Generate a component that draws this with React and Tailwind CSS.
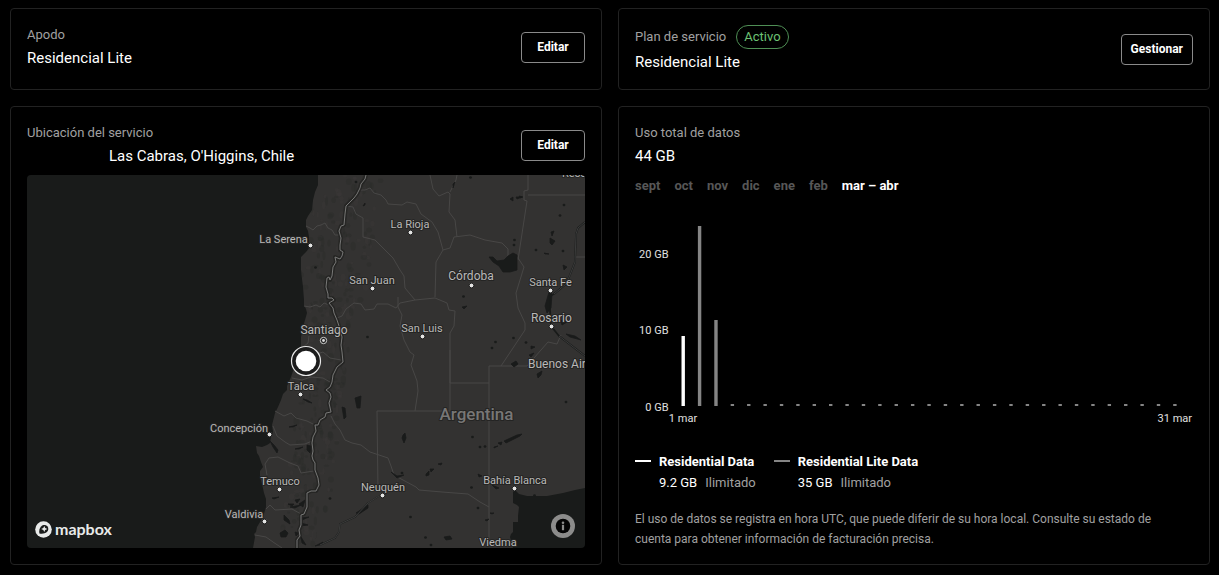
import React from 'react';

const MONTHS = ['sept', 'oct', 'nov', 'dic', 'ene', 'feb', 'mar – abr'];

const CITIES = [
  { name: 'La Rioja', x: 410, y: 228, dot: [410.5, 232.5] },
  { name: 'La Serena', x: 283.5, y: 243, dot: [310.5, 245.5] },
  { name: 'San Juan', x: 372, y: 284, dot: [372.5, 288.5] },
  { name: 'Córdoba', x: 471, y: 280, dot: [471.5, 285.5], large: true },
  { name: 'Santa Fe', x: 550.5, y: 286, dot: [550.5, 290.5] },
  { name: 'Rosario', x: 551.5, y: 322, dot: [551.5, 326.5], large: true },
  { name: 'San Luis', x: 422, y: 332, dot: [422.5, 336.5] },
  { name: 'Santiago', x: 324, y: 334, large: true },
  { name: 'Talca', x: 301, y: 390, dot: [300.5, 394.5] },
  { name: 'Concepción', x: 239, y: 432, dot: [269.5, 434.5] },
  { name: 'Temuco', x: 280, y: 485, dot: [279.5, 489.5] },
  { name: 'Neuquén', x: 383, y: 491, dot: [382.5, 495.5] },
  { name: 'Bahía Blanca', x: 515, y: 484, dot: [514.5, 488.5] },
  { name: 'Valdivia', x: 244, y: 518, dot: [264.5, 521.5] },
  { name: 'Viedma', x: 498, y: 546 },
];

const LAND =
  'M318 175 L318 185 L315 192 L313 200 L312 210 L308 216 L306 220 L306 227 L308 231 L309 237 L309 248 L306 252 L301 257 L301 270 L302 279 L303 287 L304 300 L304 305 L306 309 L307 313 L305 320 L303 327 L301 337 L301 347 L298 358 L294 368 L291 377 L287 386 L287 390 L283 394 L281 400 L278 407 L275 413 L272 425 L273 432 L271 437 L270 443 L267 445 L262 447 L256 446 L257 453 L259 456 L261 462 L263 467 L260 471 L260 477 L262 484 L264 493 L266 499 L266 507 L263 517 L257 527 L256 532 L254 534 L255 537 L253 548 L513 548 L510 537 L511 534 L513 532 L513 522 L518 522 L518 516 L519 507 L517 505 L513 503 L513 492 L515 490 L519 494 L527 496 L547 496 L563 493 L575 490 L585 488 L585 175 Z';

const ANDES =
  'M366 175 L365 179 L361 184 L360 188 L357 194 L354 198 L350 202 L346 206 L345 214 L344 225 L341 226 L339 231 L341 238 L340 245 L340 250 L343 252 L342 256 L340 259 L335 257 L336 262 L333 267 L332 276 L330 280 L329 277 L327 278 L326 287 L328 294 L328 298 L332 298 L334 300 L329 303 L333 308 L334 313 L337 320 L339 326 L342 337 L341 345 L342 352 L343 362 L337 367 L333 375 L332 382 L330 387 L326 390 L330 393 L331 397 L329 403 L331 412 L326 413 L325 417 L320 420 L318 425 L315 425 L316 431 L313 437 L312 443 L313 451 L312 456 L313 460 L315 463 L315 470 L318 478 L319 485 L316 491 L311 491 L307 493 L307 507 L304 514 L301 515 L301 525 L299 530 L300 536 L297 540 L297 548';

const PROVINCES = [
  'M306 226 L310 228 L313 230 L317 226 L321 225 L325 223 L328 228 L332 230 L335 235 L339 235',
  'M304 306 L310 307 L316 305 L320 307 L324 303 L329 305',
  'M346 206 L353 207 L356 214 L363 218 L363 237 L375 240 L384 249 L393 258 L400 270 L404 276 L405 288 L415 300 L435 298 L447 303 L449 310 L455 311 L454 326 L450 333 L450 383',
  'M360 190 L365 190 L370 188 L374 193 L381 195 L386 200 L388 204 L402 205 L407 202 L416 204 L421 214 L432 222 L438 232 L443 250 L436 262 L435 297',
  'M443 250 L450 248 L454 237 L470 235 L485 240 L502 243 L508 249 L508 257 L518 258 L524 267 L520 280 L516 293 L518 308 L525 323 L525 330 L505 360 L501 366',
  'M430 175 L433 189 L439 196 L448 192 L450 194 L449 212 L455 220 L457 237',
  'M450 192 L456 180 L457 175',
  'M528 175 L528 190 L524 191 L524 200 L527 201 L518 260',
  'M528 195 L585 195',
  'M585 257 L574 257',
  'M337 318 L342 316 L346 309 L354 303 L361 304 L365 310 L374 309 L377 304 L388 304 L396 308 L400 303 L415 300',
  'M398 297 L398 307 L402 315 L400 326 L404 340 L410 352 L414 355 L411 365 L417 381 L418 391 L415 411',
  'M377 411 L450 411 L450 350',
  'M377 411 L378 491',
  'M450 383 L489 383',
  'M489 366 L489 540',
  'M489 366 L527 366 L548 342 L557 344 L561 335',
  'M331 416 L335 424 L340 430 L345 440 L352 443 L361 445 L370 452 L388 458 L391 466 L394 475 L403 480 L416 487 L419 490 L442 492 L468 494 L480 502 L489 507',
  'M292 378 L302 380 L311 377 L323 378 L330 382',
  'M275 411 L284 416 L291 413 L296 418 L307 421 L315 425',
  'M273 426 L277 436 L285 442 L290 445 L305 444 L312 441',
  'M267 475 L265 464 L269 458 L278 457 L290 463 L298 466 L301 473 L314 471',
  'M266 509 L270 505 L275 510 L292 509 L301 514',
  'M255 535 L266 537 L273 542 L282 548',
  'M303 347 L308 343 L309 336',
  'M314 355 L323 352 L330 358 L341 360',
];

const WATER = [
  'M489 257 L493 257 L497 261 L504 260 L508 256 L513 253 L517 255 L517 270 L510 272 L503 272 L499 266 L493 262 Z',
  'M549 292 L552 294 L551 308 L547 313 L545 306 Z',
  'M355 398 L361 396 L360 408 L357 408 Z',
  'M342 407 L345 408 L346 417 L344 419 Z',
  'M356 513 L368 505 L368 508 L359 514 Z',
  'M504 441 L517 435 L522 434 L520 436 L506 443 Z',
  'M498 443 L502 442 L501 445 Z M494 447 L498 446 L494 448 Z',
  'M403 435 L405 433 L406 438 L404 443 L402 438 Z',
  'M426 474 L429 471 L429 475 L426 476 Z M430 469 L434 469 L431 472 Z M438 464 L442 463 L441 465 Z',
  'M444 537 L450 536 L452 539 L446 540 Z',
  'M537 374 L542 371 L541 375 L538 378 Z',
  'M511 364 L516 361 L518 364 L514 367 Z',
  'M303 399 L307 400 L312 403 L308 402 Z',
  'M289 427 L297 425 L293 427 Z',
  'M270 441 L274 445 L278 450 L277 453 L273 447 Z',
  'M295 449 L303 447 L299 449 Z',
  'M307 445 L311 446 L310 453 L307 450 Z',
  'M288 504 L294 504 L292 506 Z M295 500 L300 499 L297 503 Z M299 504 L305 500 L303 507 Z M290 507 L301 505 L295 508 Z',
  'M284 515 L289 520 L290 524 L284 520 Z M280 533 L285 530 L288 533 L286 537 L281 537 Z',
  'M295 532 L299 533 L296 536 Z M301 518 L309 517 L302 520 Z M301 523 L308 525 L301 526 Z M301 537 L306 545 L302 543 Z',
  'M272 498 L279 497 L274 499 Z M315 546 L323 542 L320 545 Z',
  'M510 199 L513 197 L513 201 Z M516 197 L522 197 L517 199 Z M519 196 L523 197 L520 198 Z',
  'M550 238 L555 241 L552 245 L550 243 Z M544 253 L549 254 L545 254 Z M563 265 L567 267 L564 270 Z M551 232 L554 231 L552 236 Z',
  'M453 184 L455 182 L453 188 Z M560 320 L567 322 L562 325 Z M566 334 L575 336 L581 340 L570 337 Z',
  'M363 206 L365 203 L365 205 Z M462 307 L467 306 L464 309 Z M531 346 L535 347 L531 349 Z',
  'M529 355 L534 353 L531 357 Z M485 520 L489 519 L487 521 Z M490 513 L494 513 L492 514 Z M492 485 L499 488 L496 489 Z',
  'M391 472 L397 476 L404 475 L397 478 Z M478 474 L482 476 L479 477 Z',
];

const PONDS = [
  [315.5, 267.5], [356, 182], [367.5, 337], [330, 498.5], [470.5, 177.5], [564, 205], [560, 215.5],
  [536, 250], [563, 251], [514.5, 240], [514, 245], [463.5, 296.5], [513.5, 338], [526, 342.5],
  [495.5, 342], [492, 348], [566, 402], [472.5, 437], [480, 447], [485, 446.5], [471.5, 487.5],
  [410.5, 517], [425.5, 537.5], [431, 545], [478, 508], [534.5, 495.5], [402, 473],
];

const random = (n) => {
  const v = Math.sin(n * 127.1 + 31.7) * 43758.5453;
  return v - Math.floor(v);
};

const RELIEF = Array.from({ length: 330 }, (_, i) => {
  const t = random(i);
  const y = 176 + t * 368;
  const drift = y < 360 ? 345 - (y - 176) * 0.1 : 325 - (y - 360) * 0.12;
  return {
    x: drift + (random(i + 900) - 0.5) * (y < 300 ? 72 : 46),
    y,
    rx: 1 + random(i + 400) * 2.2,
    ry: 1 + random(i + 1300) * 3.5,
    dark: random(i + 2200) > 0.45,
  };
});

const DAYS = Array.from({ length: 31 }, (_, i) => ({
  day: i + 1,
  height: i === 0 ? 70 : i === 1 ? 180 : i === 2 ? 86 : 2,
  color: i === 0 ? '#ffffff' : '#858585',
}));

function Card({ children }) {
  return <section className="min-w-0 rounded border border-[#222222] px-4 pt-4 pb-[15px]">{children}</section>;
}

function OutlineButton({ children, label }) {
  return (
    <button
      type="button"
      aria-label={label}
      className="min-w-16 shrink-0 rounded border border-[#8a8a8a] px-[9px] py-[5px] text-xs leading-[19px] font-bold text-white"
    >
      {children}
    </button>
  );
}

function Heading({ label, badge, value, indent = false, action }) {
  return (
    <div className="flex items-center justify-between gap-4">
      <div className="min-w-0">
        <div className="flex items-center gap-2.5">
          <h2 className="text-[13px] leading-5 text-[#a0a0a0]">{label}</h2>
          {badge && (
            <span className="rounded-full border border-[#4f8f55] px-[7px] text-[13px] leading-[22px] text-[#6cc273]">
              {badge}
            </span>
          )}
        </div>
        <p className={`mt-px text-[15px] leading-6 text-white ${indent ? 'pl-[82px]' : ''}`}>{value}</p>
      </div>
      {action}
    </div>
  );
}

function ServiceMap() {
  return (
    <div className="relative mt-[7px] overflow-hidden rounded bg-[#191b1a]">
      <svg
        viewBox="27 175 558 373"
        preserveAspectRatio="xMidYMid slice"
        className="block h-[373px] w-full"
        role="img"
        aria-label="Mapa de Chile y Argentina"
      >
        <clipPath id="land">
          <path d={LAND} />
        </clipPath>
        <path d={LAND} fill="#333231" />
        <g clipPath="url(#land)">
          {RELIEF.map((r, i) => (
            <ellipse
              key={i}
              cx={r.x}
              cy={r.y}
              rx={r.rx}
              ry={r.ry}
              fill={r.dark ? '#292a29' : '#3b3a39'}
              opacity="0.35"
            />
          ))}
        </g>
        <g fill="none" stroke="#484746" strokeWidth="1" strokeLinejoin="round">
          {PROVINCES.map((d) => (
            <path key={d} d={d} />
          ))}
        </g>
        <g fill="#191b1a">
          {WATER.map((d) => (
            <path key={d} d={d} stroke="#191b1a" strokeWidth="0.8" />
          ))}
          {PONDS.map(([x, y]) => (
            <ellipse key={`${x}-${y}`} cx={x} cy={y} rx="1.4" ry="1.2" />
          ))}
        </g>
        <g fill="none" stroke="#191b1a" strokeWidth="1.8" strokeLinejoin="round">
          <path d="M585 222 L578 228 L576 234 L575 262 L570 275 L566 284 L554 294 L550 296 L550 310 L551 326 L559 336 L572 346 L585 356" />
          <path d="M320 545 L335 538 L339 532 L340 524 L355 517 L368 503 L379 496" strokeWidth="1.4" />
        </g>
        <path
          d="M585 222 L578 228 L576 234 L575 262 L570 275 L566 284 L554 294 M559 336 L572 346 L585 356 M320 545 L335 538 L339 532 L340 524 L355 517 L368 503 L379 496"
          fill="none"
          stroke="#4b4b4a"
          strokeWidth="0.7"
        />
        <path d={ANDES} fill="none" stroke="#232322" strokeWidth="4" strokeLinejoin="round" opacity="0.8" />
        <path d={ANDES} fill="none" stroke="#777776" strokeWidth="1" strokeLinejoin="round" />

        <g
          fontFamily="Roboto, sans-serif"
          fill="#b9b8b7"
          stroke="#242423"
          strokeWidth="2"
          strokeLinejoin="round"
          paintOrder="stroke"
        >
          {CITIES.map((c) => (
            <text key={c.name} x={c.x} y={c.y} textAnchor="middle" fontSize={c.large ? 12 : 11}>
              {c.name}
            </text>
          ))}
          <text x="528" y="368" fontSize="12">Buenos Aires</text>
          <text x="562" y="177" fontSize="11">Reconquista</text>
          <text x="476.5" y="420" fontSize="17" textAnchor="middle" fill="#787776" fontWeight="500">
            Argentina
          </text>
        </g>
        {CITIES.filter((c) => c.dot).map((c) => (
          <circle
            key={c.name}
            cx={c.dot[0]}
            cy={c.dot[1]}
            r="2.4"
            fill="#e4e4e3"
            stroke="#1c1c1c"
            strokeWidth="1"
          />
        ))}
        <circle cx="323.5" cy="340.5" r="3.2" fill="#222222" stroke="#c9c9c8" strokeWidth="1" />
        <circle cx="323.5" cy="340.5" r="1.4" fill="#dddddd" />
        <circle cx="306" cy="361" r="14.5" fill="#1c1c1c" stroke="#e8e8e8" strokeWidth="1.2" />
        <circle cx="306" cy="361" r="10.3" fill="#ffffff" />
      </svg>
      <a
        href="#mapbox"
        className="absolute bottom-[9px] left-2 flex items-center gap-[3px] font-['Lato',sans-serif] text-base leading-5 font-bold text-[#e8eae9]"
      >
        <svg viewBox="0 0 17 17" className="size-[17px]" aria-hidden="true">
          <circle cx="8.5" cy="8.5" r="8.3" fill="#e8eae9" />
          <path
            d="M4.4 12.6 C3.9 9.7 4.4 7.2 6.1 5.5 C7.9 3.7 10.8 3.7 12.3 5.2 C13.8 6.8 13.6 9.4 11.9 11.1 C10.1 12.8 7.1 13.1 4.4 12.6 Z"
            fill="#1a1c1b"
          />
          <path d="M9.3 4.9 L10.2 7 L12.4 7.9 L10.2 8.9 L9.3 11 L8.3 8.9 L6.2 7.9 L8.3 7 Z" fill="#e8eae9" />
        </svg>
        <span>mapbox</span>
      </a>
      <button
        type="button"
        aria-label="Atribución del mapa"
        className="absolute right-[10px] bottom-[10px] size-6 rounded-full bg-[#8c8c8b]"
      >
        <svg viewBox="0 0 24 24" className="size-6" aria-hidden="true">
          <circle cx="12" cy="12" r="7.3" fill="#050505" />
          <circle cx="12" cy="8.7" r="1.3" fill="#8c8c8b" />
          <rect x="10.9" y="10.8" width="2.2" height="5.4" fill="#8c8c8b" />
        </svg>
      </button>
    </div>
  );
}

function UsageChart() {
  return (
    <svg
      viewBox="635 215 558 212"
      className="mt-[19px] block h-[212px] w-full"
      role="img"
      aria-label="Uso diario de datos"
    >
      {DAYS.map((d, i) => (
        <rect
          key={d.day}
          x={681.5 + i * 16.39}
          y={406 - d.height}
          width="3.4"
          height={d.height}
          fill={d.color}
        />
      ))}
      <g fill="#e0e0e0" fontSize="11" fontFamily="Roboto, sans-serif">
        <text x="668.5" y="258" textAnchor="end">20 GB</text>
        <text x="668.5" y="334" textAnchor="end">10 GB</text>
        <text x="668.5" y="411" textAnchor="end">0 GB</text>
        <text x="683" y="422" textAnchor="middle">1 mar</text>
        <text x="1192" y="422" textAnchor="end">31 mar</text>
      </g>
    </svg>
  );
}

function LegendItem({ lineClass, name, amount }) {
  return (
    <li className="flex gap-2">
      <span className={`mt-[9px] h-[2px] w-4 shrink-0 ${lineClass}`} />
      <div className="leading-[21px]">
        <p className="text-[13px] font-bold text-white">{name}</p>
        <p className="flex gap-2 text-[13px] text-white">
          {amount}
          <span className="text-[#a0a0a0]">Ilimitado</span>
        </p>
      </div>
    </li>
  );
}

export default function App() {
  return (
    <main className="grid min-h-screen grid-cols-2 content-start gap-4 bg-black py-2 pr-[9px] pl-[10px] font-['Roboto','Liberation_Sans',sans-serif]">
      <Card>
        <Heading
          label="Apodo"
          value="Residencial Lite"
          action={<OutlineButton label="Editar apodo">Editar</OutlineButton>}
        />
      </Card>
      <Card>
        <Heading
          label="Plan de servicio"
          badge="Activo"
          value="Residencial Lite"
          action={<OutlineButton label="Gestionar plan">Gestionar</OutlineButton>}
        />
      </Card>
      <Card>
        <Heading
          label="Ubicación del servicio"
          value="Las Cabras, O'Higgins, Chile"
          indent
          action={<OutlineButton label="Editar ubicación">Editar</OutlineButton>}
        />
        <ServiceMap />
      </Card>
      <Card>
        <Heading label="Uso total de datos" value="44 GB" />
        <div className="mt-2 flex flex-wrap gap-[14px]">
          {MONTHS.map((month, i) => (
            <button
              key={month}
              type="button"
              aria-pressed={i === MONTHS.length - 1}
              className={`text-[13px] leading-5 font-bold ${
                i === MONTHS.length - 1 ? 'text-white' : 'text-[#575757]'
              }`}
            >
              {month}
            </button>
          ))}
        </div>
        <UsageChart />
        <ul className="mt-6 flex flex-wrap gap-[18px]">
          <LegendItem lineClass="bg-white" name="Residential Data" amount="9.2 GB" />
          <LegendItem lineClass="bg-[#858585]" name="Residential Lite Data" amount="35 GB" />
        </ul>
        <p className="mt-4 pr-4 text-xs leading-5 text-[#a0a0a0]">
          El uso de datos se registra en hora UTC, que puede diferir de su hora local. Consulte su estado de cuenta para
          obtener información de facturación precisa.
        </p>
      </Card>
    </main>
  );
}
